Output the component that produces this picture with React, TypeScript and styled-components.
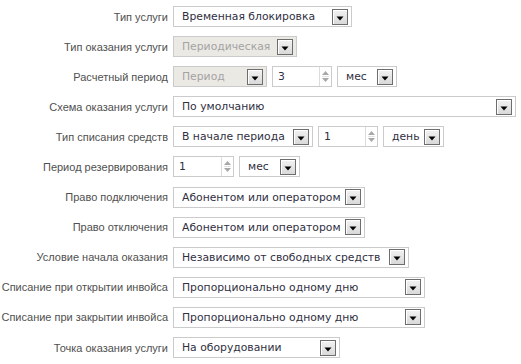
import React from 'react';
import { createGlobalStyle, styled } from 'styled-components';

const GlobalStyle = createGlobalStyle`
  body {
    margin: 0;
    background: #ffffff;
  }
`;

type Field =
  | { kind: 'select'; value: string; width: number; disabled?: boolean }
  | { kind: 'number'; value: string; width: number };

type Row = { label: string; fields: Field[] };

const rows: Row[] = [
  { label: 'Тип услуги', fields: [{ kind: 'select', value: 'Временная блокировка', width: 179 }] },
  { label: 'Тип оказания услуги', fields: [{ kind: 'select', value: 'Периодическая', width: 124, disabled: true }] },
  {
    label: 'Расчетный период',
    fields: [
      { kind: 'select', value: 'Период', width: 94, disabled: true },
      { kind: 'number', value: '3', width: 60 },
      { kind: 'select', value: 'мес', width: 60 },
    ],
  },
  { label: 'Схема оказания услуги', fields: [{ kind: 'select', value: 'По умолчанию', width: 343 }] },
  {
    label: 'Тип списания средств',
    fields: [
      { kind: 'select', value: 'В начале периода', width: 140 },
      { kind: 'number', value: '1', width: 60 },
      { kind: 'select', value: 'день', width: 61 },
    ],
  },
  {
    label: 'Период резервирования',
    fields: [
      { kind: 'number', value: '1', width: 61 },
      { kind: 'select', value: 'мес', width: 61 },
    ],
  },
  { label: 'Право подключения', fields: [{ kind: 'select', value: 'Абонентом или оператором', width: 192 }] },
  { label: 'Право отключения', fields: [{ kind: 'select', value: 'Абонентом или оператором', width: 192 }] },
  { label: 'Условие начала оказания', fields: [{ kind: 'select', value: 'Независимо от свободных средств', width: 236 }] },
  { label: 'Списание при открытии инвойса', fields: [{ kind: 'select', value: 'Пропорционально одному дню', width: 252 }] },
  { label: 'Списание при закрытии инвойса', fields: [{ kind: 'select', value: 'Пропорционально одному дню', width: 252 }] },
  { label: 'Точка оказания услуги', fields: [{ kind: 'select', value: 'На оборудовании', width: 167 }] },
];

const ServiceForm = () => {
  return (
    <Form>
      {rows.map((row) => (
        <React.Fragment key={row.label}>
          <Label>{row.label}</Label>
          <Controls>
            {row.fields.map((field, i) =>
              field.kind === 'select' ? (
                <SelectBox key={i} $width={field.width} $disabled={field.disabled}>
                  <SelectText>{field.value}</SelectText>
                  <DropButton>
                    <svg width="8" height="5" viewBox="0 0 8 5">
                      <path d="M0.5 0.5 L7.5 0.5 L4 4.5 Z" fill="#000" />
                    </svg>
                  </DropButton>
                </SelectBox>
              ) : (
                <NumberBox key={i} $width={field.width}>
                  <NumberText>{field.value}</NumberText>
                  <Spinner>
                    <svg width="9" height="17" viewBox="0 0 9 17">
                      <path d="M1 7 L4.5 3 L8 7 Z" fill="#a8a8a8" />
                      <line x1="1" y1="8.5" x2="8" y2="8.5" stroke="#e2e2e2" />
                      <path d="M1 10 L4.5 14 L8 10 Z" fill="#a8a8a8" />
                    </svg>
                  </Spinner>
                </NumberBox>
              ),
            )}
          </Controls>
        </React.Fragment>
      ))}
    </Form>
  );
};

export default function App() {
  return (
    <>
      <GlobalStyle />
      <ServiceForm />
    </>
  );
}

const Form = styled.div`
  display: grid;
  grid-template-columns: 168px 1fr;
  grid-auto-rows: 21px;
  column-gap: 5px;
  row-gap: 9.1px;
  padding-top: 6px;
`;

const Label = styled.div`
  display: flex;
  align-items: center;
  justify-content: flex-end;
  white-space: nowrap;
  font-family: 'Liberation Sans', Arial, sans-serif;
  font-size: 11px;
  color: #505050;
`;

const Controls = styled.div`
  display: flex;
  align-items: stretch;
  gap: 5px;
`;

const SelectBox = styled.div<{ $width: number; $disabled?: boolean }>`
  box-sizing: border-box;
  width: ${(p) => p.$width}px;
  height: 21px;
  display: flex;
  align-items: center;
  border: 1px solid #cbcbcb;
  background: ${(p) => (p.$disabled ? '#ebe9e4' : '#ffffff')};
  color: ${(p) => (p.$disabled ? '#a3a3a3' : '#2f2f3f')};
  padding: 0 3px 0 8px;
`;

const SelectText = styled.span`
  flex: 1;
  white-space: nowrap;
  overflow: hidden;
  font-family: 'DejaVu Sans', Verdana, sans-serif;
  font-size: 10.8px;
`;

const DropButton = styled.div`
  box-sizing: border-box;
  width: 16px;
  height: 16px;
  display: flex;
  align-items: flex-end;
  justify-content: center;
  padding-bottom: 3px;
  border: 1px solid #6d6d6d;
  background: linear-gradient(#f2f2f2, #d9d9d9);
  box-shadow: inset 1px 1px 0 #ffffff;
`;

const NumberBox = styled.div<{ $width: number }>`
  box-sizing: border-box;
  width: ${(p) => p.$width}px;
  height: 21px;
  display: flex;
  border: 1px solid #cbcbcb;
  background: #ffffff;
`;

const NumberText = styled.span`
  flex: 1;
  padding: 1px 0 0 5px;
  font-family: 'DejaVu Sans', Verdana, sans-serif;
  font-size: 10.8px;
  line-height: 17px;
  color: #2f2f3f;
`;

const Spinner = styled.div`
  width: 11px;
  display: flex;
  align-items: center;
  justify-content: center;
  border-left: 1px solid #dcdcdc;
`;
